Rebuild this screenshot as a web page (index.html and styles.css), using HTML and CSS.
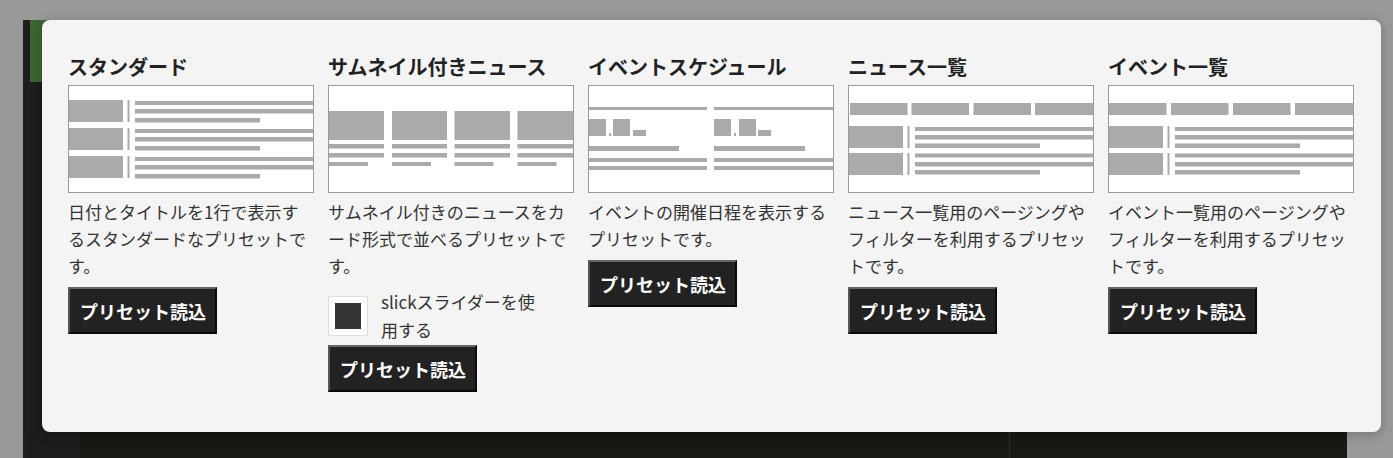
FILE: index.html
```html
<!DOCTYPE html>
<html lang="ja">
<head>
  <meta charset="UTF-8">
  <title>プリセット選択</title>
  <link rel="stylesheet" href="styles.css">
</head>
<body>

  <!-- underlying page -->
  <div class="page">
    <div class="page-side"></div>
    <div class="page-main">
      <div class="page-head"></div>
      <div class="page-body">
        <div class="page-col"></div>
        <div class="page-aside"></div>
      </div>
    </div>
  </div>

  <!-- preset modal -->
  <div class="modal">
    <div class="presets">

      <div class="preset">
        <h2 class="preset-title">スタンダード</h2>
        <div class="thumb">
          <svg width="244" height="106" viewBox="0 0 244 106">
            <g fill="#aaa">
              <rect x="0" y="14" width="54" height="22"/><rect x="58.5" y="14" width="2" height="22"/>
              <rect x="66" y="15" width="178" height="4"/><rect x="66" y="23" width="178" height="4.5"/><rect x="66" y="32" width="125" height="4.5"/>
              <rect x="0" y="42" width="54" height="22"/><rect x="58.5" y="42" width="2" height="22"/>
              <rect x="66" y="43" width="178" height="4"/><rect x="66" y="51" width="178" height="4.5"/><rect x="66" y="60" width="125" height="4.5"/>
              <rect x="0" y="70" width="54" height="22"/><rect x="58.5" y="70" width="2" height="22"/>
              <rect x="66" y="71" width="178" height="4"/><rect x="66" y="79" width="178" height="4.5"/><rect x="66" y="88" width="125" height="4.5"/>
            </g>
          </svg>
        </div>
        <p class="preset-desc">日付とタイトルを1行で表示するスタンダードなプリセットです。</p>
        <button class="load-btn">プリセット読込</button>
      </div>

      <div class="preset">
        <h2 class="preset-title">サムネイル付きニュース</h2>
        <div class="thumb">
          <svg width="244" height="106" viewBox="0 0 244 106">
            <g fill="#aaa">
              <rect x="0" y="25" width="55" height="29"/><rect x="0" y="58" width="55" height="4.5"/><rect x="0" y="67" width="55" height="4.5"/><rect x="0" y="76" width="39" height="4"/>
              <rect x="63" y="25" width="55" height="29"/><rect x="63" y="58" width="55" height="4.5"/><rect x="63" y="67" width="55" height="4.5"/><rect x="63" y="76" width="39" height="4"/>
              <rect x="125.5" y="25" width="55.5" height="29"/><rect x="125.5" y="58" width="55.5" height="4.5"/><rect x="125.5" y="67" width="55.5" height="4.5"/><rect x="125.5" y="76" width="39" height="4"/>
              <rect x="188.5" y="25" width="55.5" height="29"/><rect x="188.5" y="58" width="55.5" height="4.5"/><rect x="188.5" y="67" width="55.5" height="4.5"/><rect x="188.5" y="76" width="39" height="4"/>
            </g>
          </svg>
        </div>
        <p class="preset-desc">サムネイル付きのニュースをカード形式で並べるプリセットです。</p>
        <label class="option">
          <input type="checkbox" class="option-check" checked>
          <span class="option-text">slickスライダーを使用する</span>
        </label>
        <button class="load-btn">プリセット読込</button>
      </div>

      <div class="preset">
        <h2 class="preset-title">イベントスケジュール</h2>
        <div class="thumb">
          <svg width="244" height="106" viewBox="0 0 244 106">
            <g fill="#aaa">
              <rect x="0" y="21" width="118" height="3"/>
              <rect x="0" y="33" width="17" height="17"/><rect x="20" y="47" width="2" height="3"/><rect x="24" y="33" width="17" height="17"/><rect x="44" y="44" width="13" height="6"/>
              <rect x="0" y="60" width="90" height="5"/><rect x="0" y="72" width="118" height="4"/><rect x="0" y="80" width="118" height="4"/>
              <rect x="125" y="21" width="119" height="3"/>
              <rect x="125" y="33" width="17" height="17"/><rect x="145" y="47" width="2" height="3"/><rect x="150" y="33" width="17" height="17"/><rect x="169" y="44" width="13" height="6"/>
              <rect x="125" y="60" width="91" height="5"/><rect x="125" y="72" width="119" height="4"/><rect x="125" y="80" width="119" height="4"/>
            </g>
          </svg>
        </div>
        <p class="preset-desc">イベントの開催日程を表示するプリセットです。</p>
        <button class="load-btn">プリセット読込</button>
      </div>

      <div class="preset">
        <h2 class="preset-title">ニュース一覧</h2>
        <div class="thumb">
          <svg width="244" height="106" viewBox="0 0 244 106">
            <g fill="#aaa">
              <rect x="1" y="17" width="57.5" height="12"/><rect x="62.5" y="17" width="57.5" height="12"/><rect x="124.5" y="17" width="57.5" height="12"/><rect x="186" y="17" width="58" height="12"/>
              <rect x="0" y="40" width="54" height="22"/><rect x="58.5" y="40" width="2" height="22"/>
              <rect x="66" y="41" width="178" height="4"/><rect x="66" y="49" width="178" height="4.5"/><rect x="66" y="57.5" width="125" height="4.5"/>
              <rect x="0" y="67" width="54" height="22"/><rect x="58.5" y="67" width="2" height="22"/>
              <rect x="66" y="67.5" width="178" height="4"/><rect x="66" y="76" width="178" height="4.5"/><rect x="66" y="84" width="125" height="4.5"/>
            </g>
          </svg>
        </div>
        <p class="preset-desc">ニュース一覧用のページングやフィルターを利用するプリセットです。</p>
        <button class="load-btn">プリセット読込</button>
      </div>

      <div class="preset">
        <h2 class="preset-title">イベント一覧</h2>
        <div class="thumb">
          <svg width="244" height="106" viewBox="0 0 244 106">
            <g fill="#aaa">
              <rect x="0" y="17" width="57.5" height="12"/><rect x="62" y="17" width="57.5" height="12"/><rect x="124" y="17" width="57.5" height="12"/><rect x="186" y="17" width="58" height="12"/>
              <rect x="0" y="40" width="54" height="22"/><rect x="58.5" y="40" width="2" height="22"/>
              <rect x="66" y="41" width="178" height="4"/><rect x="66" y="49" width="178" height="4.5"/><rect x="66" y="57.5" width="125" height="4.5"/>
              <rect x="0" y="67" width="54" height="22"/><rect x="58.5" y="67" width="2" height="22"/>
              <rect x="66" y="67.5" width="178" height="4"/><rect x="66" y="76" width="178" height="4.5"/><rect x="66" y="84" width="125" height="4.5"/>
            </g>
          </svg>
        </div>
        <p class="preset-desc">イベント一覧用のページングやフィルターを利用するプリセットです。</p>
        <button class="load-btn">プリセット読込</button>
      </div>

    </div>
  </div>

</body>
</html>
```

FILE: styles.css
```css
html, body {
  height: 100%;
}
body {
  margin: 0;
  background-color: #999;
  font-family: "Noto Sans CJK JP", "Noto Sans", sans-serif;
  overflow: hidden;
}
/* page behind the overlay */
.page {
  display: flex;
  margin: 20px 0 0 23px;
  width: 1324px;
  height: calc(100% - 20px);
  background-color: #181815;
}
.page-side {
  width: 7px;
  background-color: #1e1e1e;
}
.page-main {
  flex: 1;
  display: flex;
  flex-direction: column;
}
.page-head {
  height: 62px;
  background-color: #3b6630;
}
.page-body {
  flex: 1;
  display: flex;
}
.page-col {
  width: 979px;
  border-right: 1px solid #2c2c2a;
  background: linear-gradient(to right, #1d1d1c 50px, #181815 50px);
}
.page-aside {
  flex: 1;
}
/* modal */
.modal {
  position: absolute;
  top: 20px;
  left: 42px;
  width: 1286px;
  padding: 33px 27px 40px 26px;
  background-color: #f4f4f4;
  border-radius: 8px;
  box-shadow: 0 2px 12px rgba(0, 0, 0, 0.25);
}
.presets {
  display: flex;
  gap: 14px;
  align-items: flex-start;
}
.preset {
  width: 246px;
  display: flex;
  flex-direction: column;
  align-items: flex-start;
}
.preset-title {
  margin: 0 0 4px;
  font-size: 20px;
  line-height: 28px;
  font-weight: bold;
  color: #222;
  white-space: nowrap;
}
.thumb {
  border: 1px solid #9a9a9a;
  background-color: #fff;
}
.thumb svg {
  display: block;
}
.preset-desc {
  margin: 5px 0 0;
  font-size: 17px;
  line-height: 27px;
  color: #333;
}
.load-btn {
  margin-top: 8px;
  height: 47px;
  padding: 0 9px 0 10px;
  font-family: inherit;
  font-size: 18px;
  font-weight: bold;
  color: #fff;
  background-color: #222;
  border: 2px solid;
  border-color: #666 #0a0a0a #0a0a0a #555;
  cursor: pointer;
}
.option {
  display: flex;
  align-items: center;
  gap: 13px;
  margin-top: 9px;
}
.option + .load-btn {
  margin-top: 1px;
}
.option-check {
  appearance: none;
  margin: 0;
  width: 40px;
  height: 40px;
  border: 1px solid #ddd;
  background-color: #333;
  box-shadow: inset 0 0 0 6px #fff;
}
.option-text {
  width: 158px;
  font-size: 17px;
  line-height: 28px;
  color: #333;
}
```
